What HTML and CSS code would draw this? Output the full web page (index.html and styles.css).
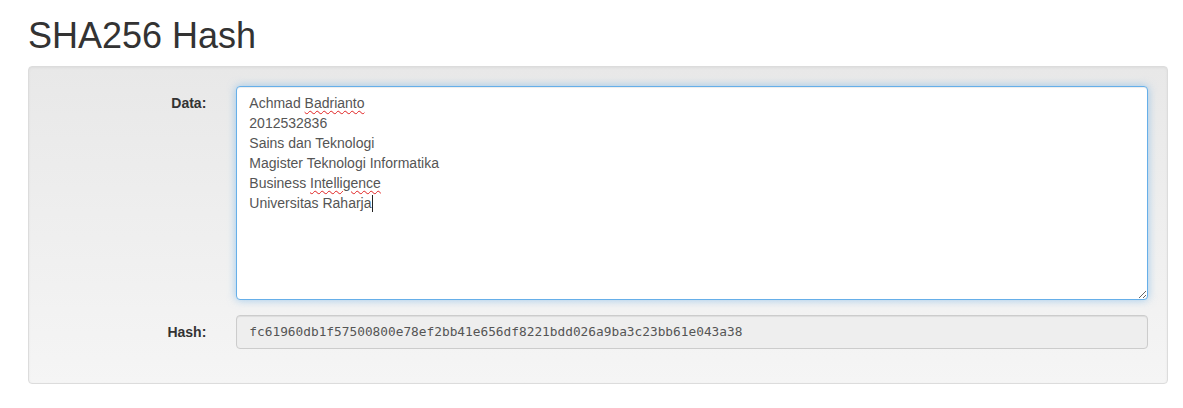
FILE: index.html
```html
<!DOCTYPE html>
<html lang="id">
<head>
<meta charset="utf-8">
<title>SHA256 Hash</title>
<link rel="stylesheet" href="styles.css">
</head>
<body>
<div class="page">
  <h1 class="title">SHA256 Hash</h1>
  <div class="well">
    <form class="form-horizontal">
      <div class="form-group">
        <label class="control-label">Data:</label>
        <div class="field">
          <div class="form-control textarea" role="textbox" aria-multiline="true" contenteditable="true" spellcheck="false">Achmad <span class="misspelled">Badrianto</span><br>2012532836<br>Sains dan Teknologi<br>Magister Teknologi Informatika<br>Business <span class="misspelled">Intelligence</span><br>Universitas Raharja<span class="caret"></span></div>
        </div>
      </div>
      <div class="form-group">
        <label class="control-label">Hash:</label>
        <div class="field">
          <div class="form-control readonly">fc61960db1f57500800e78ef2bb41e656df8221bdd026a9ba3c23bb61e043a38</div>
        </div>
      </div>
    </form>
  </div>
</div>
</body>
</html>
```
FILE: styles.css
```css
* { box-sizing: border-box; }
html, body { margin: 0; padding: 0; background: #fff; }
body {
  font-family: "Liberation Sans", Arial, Helvetica, sans-serif;
  font-size: 14px;
  line-height: 1.42857143;
  color: #333;
}
.page {
  padding: 0 15px 0 28px;
}
.title {
  font-size: 36px;
  font-weight: 500;
  line-height: 1.1;
  margin: 16px 0 10px;
  color: #333;
}
.well {
  min-height: 20px;
  padding: 19px;
  margin-bottom: 20px;
  border: 1px solid #dcdcdc;
  border-radius: 4px;
  background-image: linear-gradient(to bottom, #e8e8e8 0%, #f5f5f5 100%);
  box-shadow: inset 0 1px 3px rgba(0,0,0,.05), 0 1px 0 rgba(255,255,255,.1);
}
.form-horizontal { margin: 0 -15px; }
.form-group {
  display: flex;
  margin-bottom: 15px;
}
.control-label {
  flex: 0 0 16.66666667%;
  padding: 7px 15px 0;
  text-align: right;
  font-weight: bold;
  color: #333;
}
.field {
  flex: 0 0 83.33333333%;
  padding: 0 15px;
  min-width: 0;
}
.form-control {
  display: block;
  width: 100%;
  padding: 6px 12px;
  font-size: 14px;
  line-height: 1.42857143;
  color: #555;
  background: #fff;
  border: 1px solid #ccc;
  border-radius: 4px;
  box-shadow: inset 0 1px 1px rgba(0,0,0,.075);
}
.textarea {
  height: 214px;
  overflow: auto;
  resize: vertical;
  outline: 0;
  border-color: #66afe9;
  box-shadow: inset 0 1px 1px rgba(0,0,0,.075), 0 0 8px rgba(102,175,233,.6);
  white-space: pre-wrap;
}
.misspelled {
  text-decoration: underline wavy #e02020;
  text-decoration-thickness: 1px;
  text-underline-offset: 2px;
}
.caret {
  display: inline-block;
  width: 1px;
  height: 17px;
  background: #222;
  vertical-align: -4px;
}
.readonly {
  height: 34px;
  background: #eee;
  font-family: "DejaVu Sans Mono", "Liberation Mono", monospace;
  font-size: 12.8px;
  line-height: 20px;
  color: #555;
  white-space: nowrap;
  overflow: hidden;
}
```
